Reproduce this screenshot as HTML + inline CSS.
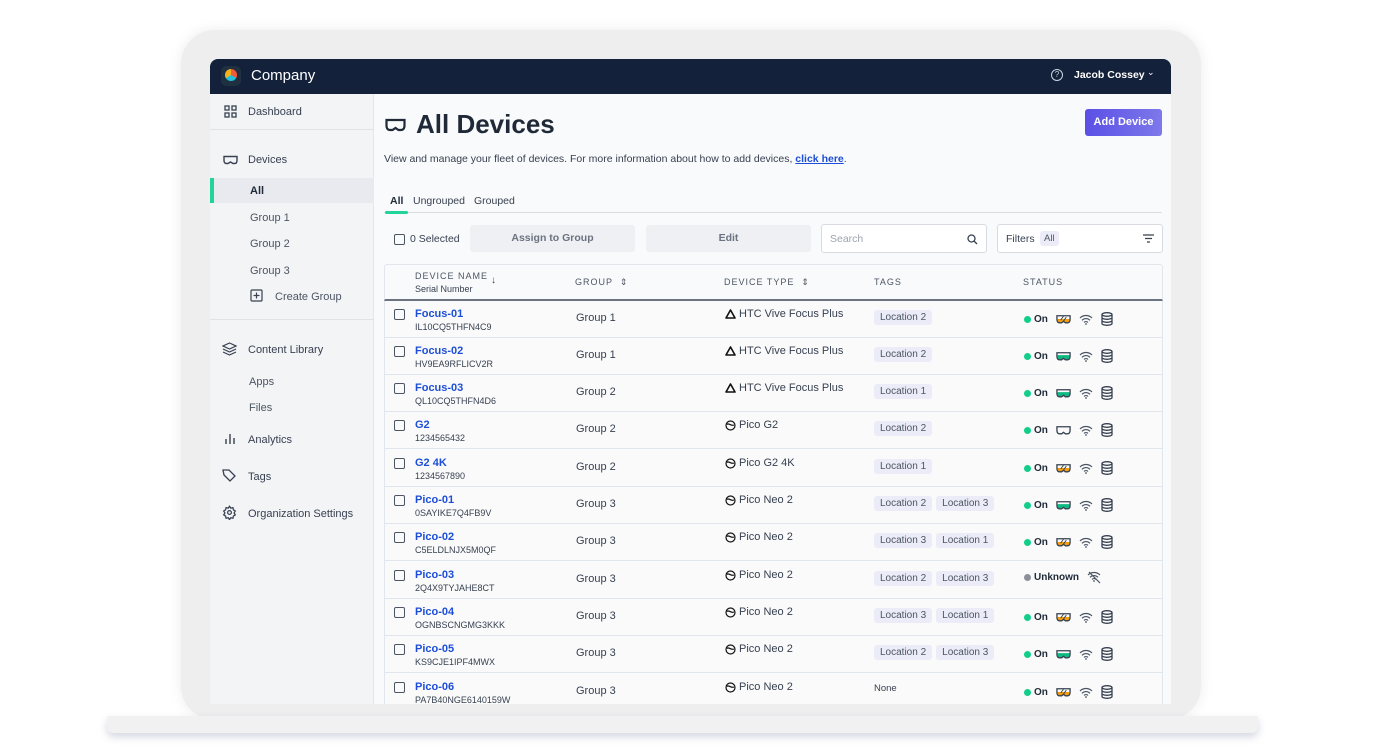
<!DOCTYPE html>
<html><head><meta charset="utf-8"><style>
*{box-sizing:border-box;margin:0;padding:0}
body{width:1400px;height:753px;background:#fff;font-family:"Liberation Sans",sans-serif;position:relative;overflow:hidden;color:#374151}
.abs{position:absolute}
.frame{left:181px;top:30px;width:1020px;height:690px;border-radius:34px;background:#eeeeef;box-shadow:0 0 14px rgba(0,0,0,.08)}
.base{left:107px;top:716px;width:1151px;height:17px;background:#f1f1f2;border-radius:2px 2px 6px 6px;box-shadow:0 4px 8px rgba(90,100,140,.25)}
.screen{left:210px;top:59px;width:961px;height:645px;background:#f9fafb;border-radius:8px 8px 0 0;overflow:hidden}
.hdr{left:0;top:0;width:961px;height:35px;background:#13213a;color:#fff}
.side{left:0;top:35px;width:164px;height:610px;background:#f3f4f6;border-right:1px solid #e5e7eb}
.si{position:absolute;left:38px;font-size:11px;color:#374151}
.sub{position:absolute;left:40px;font-size:11px;color:#4b5563}
.tag{display:inline-block;background:#ececf8;color:#4b5563;font-size:10px;padding:2px 6px;border-radius:3px;margin-right:4px}
.row{position:absolute;left:174px;width:778px;height:37px;background:#fafafa;border-bottom:1.5px solid #e1e5ec}
.row .cb{position:absolute;left:10px;top:8px;width:11px;height:11px;border:1.4px solid #4b5563;border-radius:2px}
.row .nm{position:absolute;left:31px;top:7px;font-size:11px;font-weight:bold;color:#1d4ed8}
.row .sn{position:absolute;left:31px;top:21px;font-size:9px;color:#374151}
.row .gp{position:absolute;left:192px;top:11px;font-size:11px;color:#374151}
.row .ty{position:absolute;left:341px;top:7px;font-size:11px;color:#374151;display:flex;align-items:center;gap:3px}
.row .tg{position:absolute;left:490px;top:6px}
.row .st{position:absolute;left:640px;top:11px;display:flex;align-items:center;font-size:10px;font-weight:bold;color:#1f2937}
.dot{width:7px;height:7px;border-radius:50%;background:#10cf8a;margin-right:3px}
.st svg{margin-left:8px}
</style></head><body>
<div class="abs frame"></div>
<div class="abs base"></div>
<div class="abs screen">
 <div class="abs hdr">
  <div class="abs" style="left:11px;top:7px;width:20px;height:20px;border-radius:5px;background:#1f3140"></div>
  <div class="abs" style="left:15px;top:10px;width:12px;height:12px;border-radius:50%;background:conic-gradient(#f15a3a 0 33%,#22c1e0 0 66%,#f5b21a 0)"></div>
  <div class="abs" style="left:41px;top:8px;font-size:15px">Company</div>
  <div class="abs" style="left:841px;top:10px;width:12px;height:12px;border:1px solid #cbd5e1;border-radius:50%;font-size:8px;text-align:center;line-height:10px;color:#cbd5e1">?</div>
  <div class="abs" style="left:864px;top:10px;font-size:10.5px;font-weight:bold">Jacob Cossey</div>
  <div class="abs" style="left:937px;top:8px;font-size:9px">&#8964;</div>
 </div>
 <div class="abs side">
  <svg class="abs" style="left:14px;top:11px" width="13" height="13" viewBox="0 0 13 13" fill="none" stroke="#374151" stroke-width="1.3"><rect x="1" y="1" width="4" height="4"/><rect x="8" y="1" width="4" height="4"/><rect x="1" y="8" width="4" height="4"/><rect x="8" y="8" width="4" height="4"/></svg>
  <div class="si" style="top:12px">Dashboard</div>
  <div class="abs" style="left:0;top:35px;width:164px;height:1px;background:#dfe3e8"></div>
  <svg class="abs" style="left:13px;top:61px" width="15" height="10" viewBox="0 0 15 10" fill="none" stroke="#374151" stroke-width="1.4"><path d="M1 1.5h13v4c0 2-1 3-2.5 3H10L7.5 7 5 8.5H3.5C2 8.5 1 7.5 1 5.5z"/></svg>
  <div class="si" style="top:60px">Devices</div>
  <div class="abs" style="left:0;top:84px;width:164px;height:25px;background:#e9eaef"></div>
  <div class="abs" style="left:0;top:84px;width:4px;height:25px;background:#22d39a"></div>
  <div class="sub" style="top:91px;font-weight:bold;color:#1f2937">All</div>
  <div class="sub" style="top:118px">Group 1</div>
  <div class="sub" style="top:144px">Group 2</div>
  <div class="sub" style="top:171px">Group 3</div>
  <svg class="abs" style="left:40px;top:195px" width="13" height="13" viewBox="0 0 13 13" fill="none" stroke="#374151" stroke-width="1.2"><rect x="1" y="1" width="11" height="11" rx="1"/><path d="M6.5 3.5v6M3.5 6.5h6"/></svg>
  <div class="sub" style="top:197px;left:65px">Create Group</div>
  <div class="abs" style="left:0;top:225px;width:164px;height:1px;background:#dfe3e8"></div>
  <svg class="abs" style="left:12px;top:248px" width="15" height="14" viewBox="0 0 15 14" fill="none" stroke="#374151" stroke-width="1.2"><path d="M7.5 1L14 4 7.5 7 1 4z M1 7l6.5 3L14 7 M1 10l6.5 3L14 10"/></svg>
  <div class="si" style="top:250px">Content Library</div>
  <div class="sub" style="top:282px;left:39px">Apps</div>
  <div class="sub" style="top:308px;left:39px">Files</div>
  <svg class="abs" style="left:14px;top:339px" width="12" height="12" viewBox="0 0 12 12" stroke="#374151" stroke-width="1.4"><path d="M2 11V6M6 11V1M10 11V5"/></svg>
  <div class="si" style="top:340px">Analytics</div>
  <svg class="abs" style="left:12px;top:375px" width="14" height="13" viewBox="0 0 14 13" fill="none" stroke="#374151" stroke-width="1.3"><path d="M1 1h6l6 6-5 5-6-6z"/></svg>
  <div class="si" style="top:377px">Tags</div>
  <svg class="abs" style="left:12px;top:411px" width="15" height="15" viewBox="0 0 24 24" fill="none" stroke="#374151" stroke-width="2"><circle cx="12" cy="12" r="3"/><path d="M12 2l2 3 3.5-.8.8 3.5 3 2-2 3 2 3-3 2-.8 3.5-3.5-.8-2 3-2-3-3.5.8-.8-3.5-3-2 2-3-2-3 3-2 .8-3.5 3.5.8z"/></svg>
  <div class="si" style="top:414px">Organization Settings</div>
 </div>
 <svg class="abs" style="left:175px;top:59px" width="21" height="15" viewBox="0 0 21 15" fill="none" stroke="#1f2937" stroke-width="2.2"><path d="M1.5 2h18v5.5c0 3-1.5 4.5-3.5 4.5h-2.5L10.5 10 7.5 12H5C3 12 1.5 10.5 1.5 7.5z"/></svg>
 <div class="abs" style="left:206px;top:50px;font-size:26px;font-weight:bold;color:#1f2937">All Devices</div>
 <div class="abs" style="left:875px;top:50px;width:77px;height:27px;background:linear-gradient(90deg,#5b50e6,#7d78ea);border-radius:3px;color:#fff;font-size:11px;font-weight:bold;text-align:center;line-height:27px">Add Device</div>
 <div class="abs" style="left:174px;top:94px;font-size:10.5px;color:#374151">View and manage your fleet of devices. For more information about how to add devices, <span style="color:#1d4ed8;font-weight:bold;text-decoration:underline">click here</span>.</div>
 <div class="abs" style="left:180px;top:136px;font-size:10.5px;font-weight:bold;color:#1f2937">All</div>
 <div class="abs" style="left:203px;top:136px;font-size:10.5px;color:#374151">Ungrouped</div>
 <div class="abs" style="left:264px;top:136px;font-size:10.5px;color:#374151">Grouped</div>
 <div class="abs" style="left:174px;top:153px;width:778px;height:1px;background:#d9dde3"></div>
 <div class="abs" style="left:175px;top:152px;width:23px;height:3px;background:#22d39a;border-radius:2px"></div>
 <div class="abs" style="left:184px;top:175px;width:11px;height:11px;border:1.4px solid #4b5563;border-radius:2px"></div>
 <div class="abs" style="left:200px;top:174px;font-size:10.5px;color:#374151">0 Selected</div>
 <div class="abs" style="left:260px;top:166px;width:165px;height:27px;background:#eef0f3;border-radius:3px;text-align:center;line-height:27px;font-size:10.5px;font-weight:bold;color:#6b7280">Assign to Group</div>
 <div class="abs" style="left:436px;top:166px;width:165px;height:27px;background:#eef0f3;border-radius:3px;text-align:center;line-height:27px;font-size:10.5px;font-weight:bold;color:#6b7280">Edit</div>
 <div class="abs" style="left:611px;top:165px;width:166px;height:29px;border:1px solid #d8dce2;border-radius:3px;background:#fff"></div>
 <div class="abs" style="left:620px;top:174px;font-size:10.5px;color:#9ca3af">Search</div>
 <svg class="abs" style="left:757px;top:175px" width="11" height="11" viewBox="0 0 11 11" fill="none" stroke="#374151" stroke-width="1.3"><circle cx="4.5" cy="4.5" r="3.5"/><path d="M7 7l3 3"/></svg>
 <div class="abs" style="left:787px;top:165px;width:166px;height:29px;border:1px solid #d8dce2;border-radius:3px;background:#fff"></div>
 <div class="abs" style="left:796px;top:174px;font-size:10.5px;color:#374151">Filters</div>
 <div class="abs" style="left:830px;top:172px;padding:2px 4px;font-size:9.5px;background:#ececf8;border-radius:3px;color:#4b5563">All</div>
 <svg class="abs" style="left:933px;top:175px" width="11" height="9" viewBox="0 0 11 9" stroke="#374151" stroke-width="1.2"><path d="M0 1h11M2 4.5h7M4 8h3"/></svg>
 <div class="abs" style="left:174px;top:205px;width:779px;height:37px;background:#f9fafb;border:1px solid #e1e5ec;border-bottom:2px solid #6b7280;border-radius:3px 3px 0 0"></div>
 <div class="abs" style="left:205px;top:212px;font-size:9px;letter-spacing:1px;color:#4b5563">DEVICE NAME</div>
 <div class="abs" style="left:205px;top:225px;font-size:9px;color:#374151">Serial Number</div>
 <div class="abs" style="left:281px;top:216px;font-size:10px;color:#374151">&#8595;</div>
 <div class="abs" style="left:365px;top:218px;font-size:9px;letter-spacing:1px;color:#4b5563">GROUP &nbsp;&#8661;</div>
 <div class="abs" style="left:514px;top:218px;font-size:9px;letter-spacing:1px;color:#4b5563">DEVICE TYPE &nbsp;&#8661;</div>
 <div class="abs" style="left:664px;top:218px;font-size:9px;letter-spacing:1px;color:#4b5563">TAGS</div>
 <div class="abs" style="left:813px;top:218px;font-size:9px;letter-spacing:1px;color:#4b5563">STATUS</div>
 <svg width="0" height="0" style="position:absolute"><defs>
  <symbol id="hs" viewBox="0 0 16 11"><path d="M1 1.5h14v4c0 2.5-1 3.5-3 3.5h-2L8 7.5 6 9H4C2 9 1 8 1 5.5z" fill="none" stroke="#374151" stroke-width="1.4"/></symbol>
  <symbol id="hso" viewBox="0 0 16 11"><path d="M1.7 5h12.6v.5c0 2.5-1 3-2.3 3h-2L8 7 6 8.5H4c-1.3 0-2.3-.5-2.3-3z" fill="#f59e0b"/><path d="M1 1.5h14v4c0 2.5-1 3.5-3 3.5h-2L8 7.5 6 9H4C2 9 1 8 1 5.5z" fill="none" stroke="#374151" stroke-width="1.4"/><path d="M5 6l3-4M8 7l3-4" stroke="#374151" stroke-width="1"/></symbol>
  <symbol id="hsg" viewBox="0 0 16 11"><path d="M1.7 4h12.6v1.5c0 2.5-1 3-2.3 3h-2L8 7 6 8.5H4c-1.3 0-2.3-.5-2.3-3z" fill="#10b981"/><path d="M1 1.5h14v4c0 2.5-1 3.5-3 3.5h-2L8 7.5 6 9H4C2 9 1 8 1 5.5z" fill="none" stroke="#374151" stroke-width="1.4"/></symbol>
  <symbol id="wf" viewBox="0 0 14 11"><path d="M1 4a8.5 8.5 0 0 1 12 0M3 6.3a5.5 5.5 0 0 1 8 0M5 8.4a2.8 2.8 0 0 1 4 0" fill="none" stroke="#4b5563" stroke-width="1.2"/><circle cx="7" cy="10" r=".9" fill="#4b5563"/></symbol>
  <symbol id="db" viewBox="0 0 12 14"><ellipse cx="6" cy="2.5" rx="5" ry="1.8" fill="none" stroke="#374151" stroke-width="1.3"/><path d="M1 2.5v9c0 1 2.2 1.8 5 1.8s5-.8 5-1.8v-9M1 5.5c0 1 2.2 1.8 5 1.8s5-.8 5-1.8M1 8.5c0 1 2.2 1.8 5 1.8s5-.8 5-1.8" fill="none" stroke="#374151" stroke-width="1.3"/></symbol>
  <symbol id="htc" viewBox="0 0 11 10"><path d="M5.5 1L10 9H1z" fill="none" stroke="#111" stroke-width="1.6" stroke-linejoin="round"/></symbol>
  <symbol id="pico" viewBox="0 0 11 11"><circle cx="5.5" cy="5.5" r="4.5" fill="none" stroke="#111" stroke-width="1.2"/><path d="M2 4.5c2-2 4 2 7 0.5" fill="none" stroke="#111" stroke-width="1.2"/></symbol>
 </defs></svg>

 <div class="row" style="top:242px"><div class="cb"></div><div class="nm">Focus-01</div><div class="sn">IL10CQ5THFN4C9</div><div class="gp">Group 1</div><div class="ty"><svg width="11" height="10"><use href="#htc"/></svg>HTC Vive Focus Plus</div><div class="tg"><span class="tag">Location 2</span></div><div class="st"><span class="dot"></span>On<svg width="15" height="11"><use href="#hso"/></svg><svg width="14" height="11"><use href="#wf"/></svg><svg width="12" height="14"><use href="#db"/></svg></div></div>
 <div class="row" style="top:279px"><div class="cb"></div><div class="nm">Focus-02</div><div class="sn">HV9EA9RFLICV2R</div><div class="gp">Group 1</div><div class="ty"><svg width="11" height="10"><use href="#htc"/></svg>HTC Vive Focus Plus</div><div class="tg"><span class="tag">Location 2</span></div><div class="st"><span class="dot"></span>On<svg width="15" height="11"><use href="#hsg"/></svg><svg width="14" height="11"><use href="#wf"/></svg><svg width="12" height="14"><use href="#db"/></svg></div></div>
 <div class="row" style="top:316px"><div class="cb"></div><div class="nm">Focus-03</div><div class="sn">QL10CQ5THFN4D6</div><div class="gp">Group 2</div><div class="ty"><svg width="11" height="10"><use href="#htc"/></svg>HTC Vive Focus Plus</div><div class="tg"><span class="tag">Location 1</span></div><div class="st"><span class="dot"></span>On<svg width="15" height="11"><use href="#hsg"/></svg><svg width="14" height="11"><use href="#wf"/></svg><svg width="12" height="14"><use href="#db"/></svg></div></div>
 <div class="row" style="top:353px"><div class="cb"></div><div class="nm">G2</div><div class="sn">1234565432</div><div class="gp">Group 2</div><div class="ty"><svg width="11" height="11"><use href="#pico"/></svg>Pico G2</div><div class="tg"><span class="tag">Location 2</span></div><div class="st"><span class="dot"></span>On<svg width="15" height="11"><use href="#hs"/></svg><svg width="14" height="11"><use href="#wf"/></svg><svg width="12" height="14"><use href="#db"/></svg></div></div>
 <div class="row" style="top:391px"><div class="cb"></div><div class="nm">G2 4K</div><div class="sn">1234567890</div><div class="gp">Group 2</div><div class="ty"><svg width="11" height="11"><use href="#pico"/></svg>Pico G2 4K</div><div class="tg"><span class="tag">Location 1</span></div><div class="st"><span class="dot"></span>On<svg width="15" height="11"><use href="#hso"/></svg><svg width="14" height="11"><use href="#wf"/></svg><svg width="12" height="14"><use href="#db"/></svg></div></div>
 <div class="row" style="top:428px"><div class="cb"></div><div class="nm">Pico-01</div><div class="sn">0SAYIKE7Q4FB9V</div><div class="gp">Group 3</div><div class="ty"><svg width="11" height="11"><use href="#pico"/></svg>Pico Neo 2</div><div class="tg"><span class="tag">Location 2</span><span class="tag">Location 3</span></div><div class="st"><span class="dot"></span>On<svg width="15" height="11"><use href="#hsg"/></svg><svg width="14" height="11"><use href="#wf"/></svg><svg width="12" height="14"><use href="#db"/></svg></div></div>
 <div class="row" style="top:465px"><div class="cb"></div><div class="nm">Pico-02</div><div class="sn">C5ELDLNJX5M0QF</div><div class="gp">Group 3</div><div class="ty"><svg width="11" height="11"><use href="#pico"/></svg>Pico Neo 2</div><div class="tg"><span class="tag">Location 3</span><span class="tag">Location 1</span></div><div class="st"><span class="dot"></span>On<svg width="15" height="11"><use href="#hso"/></svg><svg width="14" height="11"><use href="#wf"/></svg><svg width="12" height="14"><use href="#db"/></svg></div></div>
 <div class="row" style="top:503px"><div class="cb"></div><div class="nm">Pico-03</div><div class="sn">2Q4X9TYJAHE8CT</div><div class="gp">Group 3</div><div class="ty"><svg width="11" height="11"><use href="#pico"/></svg>Pico Neo 2</div><div class="tg"><span class="tag">Location 2</span><span class="tag">Location 3</span></div><div class="st" style="top:9px"><span class="dot" style="background:#8b8f98"></span>Unknown<svg width="15" height="13" viewBox="0 0 15 13"><use href="#wf" width="14" height="11"/><path d="M2 1l11 11" stroke="#4b5563" stroke-width="1.2"/></svg></div></div>
 <div class="row" style="top:540px"><div class="cb"></div><div class="nm">Pico-04</div><div class="sn">OGNBSCNGMG3KKK</div><div class="gp">Group 3</div><div class="ty"><svg width="11" height="11"><use href="#pico"/></svg>Pico Neo 2</div><div class="tg"><span class="tag">Location 3</span><span class="tag">Location 1</span></div><div class="st"><span class="dot"></span>On<svg width="15" height="11"><use href="#hso"/></svg><svg width="14" height="11"><use href="#wf"/></svg><svg width="12" height="14"><use href="#db"/></svg></div></div>
 <div class="row" style="top:577px"><div class="cb"></div><div class="nm">Pico-05</div><div class="sn">KS9CJE1IPF4MWX</div><div class="gp">Group 3</div><div class="ty"><svg width="11" height="11"><use href="#pico"/></svg>Pico Neo 2</div><div class="tg"><span class="tag">Location 2</span><span class="tag">Location 3</span></div><div class="st"><span class="dot"></span>On<svg width="15" height="11"><use href="#hsg"/></svg><svg width="14" height="11"><use href="#wf"/></svg><svg width="12" height="14"><use href="#db"/></svg></div></div>
 <div class="row" style="top:615px"><div class="cb"></div><div class="nm">Pico-06</div><div class="sn">PA7B40NGE6140159W</div><div class="gp">Group 3</div><div class="ty"><svg width="11" height="11"><use href="#pico"/></svg>Pico Neo 2</div><div class="tg" style="font-size:9.5px;top:9px">None</div><div class="st"><span class="dot"></span>On<svg width="15" height="11"><use href="#hso"/></svg><svg width="14" height="11"><use href="#wf"/></svg><svg width="12" height="14"><use href="#db"/></svg></div></div>
 <div class="abs" style="left:174px;top:242px;width:1px;height:410px;background:#e1e5ec"></div>
 <div class="abs" style="left:952px;top:242px;width:1px;height:410px;background:#e1e5ec"></div>
</div>
</body></html>
